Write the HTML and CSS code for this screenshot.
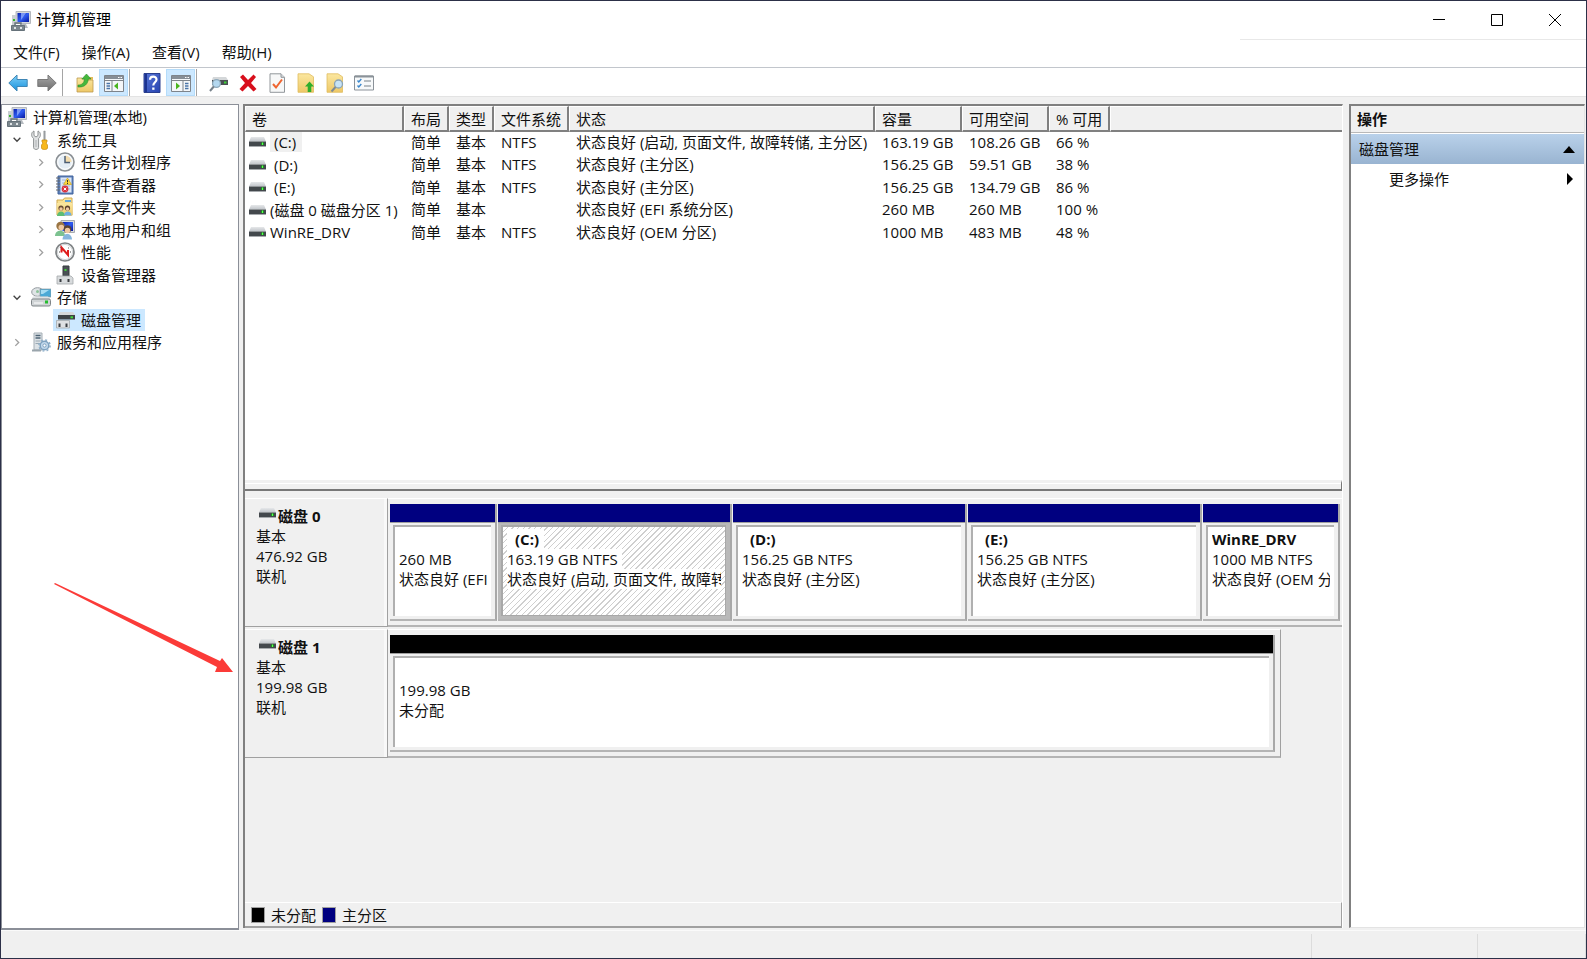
FILE: index.html
```html
<!DOCTYPE html>
<html lang="zh-CN">
<head>
  <meta charset="UTF-8">
  <title>计算机管理</title>
  <link rel="stylesheet" href="styles.css">
</head>
<body>

  <!-- icon sprite -->
  <svg class="sprite" aria-hidden="true">
    <defs>
      <linearGradient id="gScreen" x1="0" y1="0" x2="1" y2="1">
        <stop offset="0" stop-color="#0a1fae"/><stop offset=".5" stop-color="#2f5cf0"/><stop offset="1" stop-color="#0616a0"/>
      </linearGradient>
      <linearGradient id="gBlue" x1="0" y1="0" x2="0" y2="1">
        <stop offset="0" stop-color="#7fd0f8"/><stop offset="1" stop-color="#1590dc"/>
      </linearGradient>
      <linearGradient id="gGray" x1="0" y1="0" x2="0" y2="1">
        <stop offset="0" stop-color="#a8a8a8"/><stop offset="1" stop-color="#6c6c6c"/>
      </linearGradient>
      <linearGradient id="gFolder" x1="0" y1="0" x2="0" y2="1">
        <stop offset="0" stop-color="#fbe7a0"/><stop offset="1" stop-color="#eec867"/>
      </linearGradient>
      <linearGradient id="gDrive" x1="0" y1="0" x2="0" y2="1">
        <stop offset="0" stop-color="#e6e8ea"/><stop offset="1" stop-color="#bfc3c8"/>
      </linearGradient>
      <linearGradient id="gHelp" x1="0" y1="0" x2="1" y2="1">
        <stop offset="0" stop-color="#5877d8"/><stop offset="1" stop-color="#2743b0"/>
      </linearGradient>
    </defs>

    <symbol id="i-computer" viewBox="0 0 20 20">
      <path d="M5 .5h14.500v12H5z" fill="#d5d8dc" stroke="#b4b8be"/>
      <path d="M6.500 2H18v9H6.500z" fill="url(#gScreen)"/>
      <path d="M10 2h5l-5 7z" fill="#9db8ff" opacity=".7"/>
      <path d="M1 4h4v10H1z" fill="#c9ced2"/><path d="M2 8h2v2H2z" fill="#36b52c"/>
      <path d="M11 13h4l2 4h-5z" fill="#b5bac0"/>
      <path d="M.5 14.500h13v5H.5z" fill="#7c878e" stroke="#66727a"/>
      <path d="M4 14v-2h6v2" fill="none" stroke="#66727a" stroke-width="1.400"/>
      <path d="M3 16h2v2H3zM9 16h2v2H9z" fill="#dfe4e6"/>
    </symbol>

    <symbol id="i-tools" viewBox="0 0 20 20">
      <path d="M3 1v4.500l2 1.500 2-1.500V1c3 1.200 3.200 5.500.6 7.500v9c0 2.600-5 2.600-5 0v-9C-.2 6.500 0 2.200 3 1z" fill="#dfe1e2" stroke="#8d9192"/>
      <path d="M5 10v7" stroke="#aeb2b4"/>
      <path d="M12.800 1h1.400v9h-1.400z" fill="#a1a5a8" stroke="#888c8e" stroke-width=".5"/>
      <path d="M11 10h5v2l-1 1 1.500 2v3c0 2-6 2-6 0v-3l1.500-2-1-1z" fill="#f8b81c" stroke="#c48a10" stroke-width=".7"/>
    </symbol>

    <symbol id="i-clock" viewBox="0 0 20 20">
      <circle cx="10" cy="10" r="9" fill="#e9eef2" stroke="#8b9094" stroke-width="1.600"/>
      <circle cx="10" cy="10" r="7.200" fill="#e4edf5" stroke="#fff" stroke-width="1"/>
      <path d="M10 3.500A6.500 6.500 0 0 1 16.500 10H10z" fill="#f3dcae"/>
      <path d="M10 4v6.500h5" fill="none" stroke="#4b5d74" stroke-width="1.500"/>
    </symbol>

    <symbol id="i-event" viewBox="0 0 20 20">
      <path d="M3 1h15v18H3z" fill="#5f82bb" stroke="#40639c"/>
      <path d="M5.500 2.500h11v15h-11z" fill="#dce7f7"/>
      <path d="M7 5h8M7 8h8M7 11h8M7 14h8" stroke="#96acd0" stroke-width=".8"/>
      <path d="M1 3h4M1 6h4M1 9h4M1 12h4M1 15h4" stroke="#65696f" stroke-width="1.200"/>
      <path d="M12.500 3l4 6.500h-8z" fill="#ffd83a" stroke="#c69b15" stroke-width=".6"/>
      <path d="M12.500 5v2.300M12.500 8v1" stroke="#333"/>
      <circle cx="10" cy="14" r="3.400" fill="#d93440"/>
      <path d="M8.700 12.700l2.600 2.600M11.300 12.700l-2.600 2.600" stroke="#fff"/>
    </symbol>

    <symbol id="i-share" viewBox="0 0 20 20">
      <path d="M2 3h6l1.500-2H17v17H2z" fill="url(#gFolder)" stroke="#d2aa4c"/>
      <path d="M10 3h6v2h-6z" fill="#62a6dc"/>
      <path d="M2 6h15.500v12.500H2z" fill="url(#gFolder)"/>
      <circle cx="6" cy="11" r="2.600" fill="#6a4c34"/><circle cx="12.500" cy="11" r="2.600" fill="#5b412d"/>
      <circle cx="6" cy="12" r="1.700" fill="#f0c8a0"/><circle cx="12.500" cy="12" r="1.700" fill="#f0c8a0"/>
      <path d="M2 19c0-6 8-6 8 0z" fill="#5ebc74"/><path d="M9 18.500c0-5.500 7.500-5.500 7.500 0z" fill="#6caee2"/>
    </symbol>

    <symbol id="i-users" viewBox="0 0 20 20">
      <path d="M6 .5h13.500v12H6z" fill="#d9dcdf" stroke="#a8abb0"/>
      <path d="M7.500 2H18v9H7.500z" fill="url(#gScreen)"/>
      <circle cx="5.500" cy="6" r="4.200" fill="#9a7543"/><circle cx="6.300" cy="7.500" r="2.800" fill="#efc9a2"/>
      <path d="M0 16c0-7 10-7 10 0z" fill="#7cc290"/>
      <circle cx="12.500" cy="9" r="3.800" fill="#5c4433"/><circle cx="12.500" cy="10.500" r="2.700" fill="#efc9a2"/>
      <path d="M7.500 19.500c0-7.500 9.500-7.500 9.500 0z" fill="#86b6de"/>
    </symbol>

    <symbol id="i-perf" viewBox="0 0 20 20">
      <circle cx="10" cy="10" r="9" fill="#fff" stroke="#7f8385" stroke-width="1.700"/>
      <circle cx="10" cy="10" r="7.600" fill="#fff" stroke="#d0d3d5"/>
      <path d="M6.500 10.500V5.500l6.500 7.500V8" fill="none" stroke="#e01c1c" stroke-width="2"/>
      <path d="M4 10h1M5.500 5.500l.8.800M15 10h1M14 5.500l-.8.800" stroke="#444"/>
    </symbol>

    <symbol id="i-device" viewBox="0 0 20 20">
      <path d="M8 1h6v10H8z" fill="#4a5055" stroke="#363b3f"/>
      <path d="M9.500 4h2v2h-2z" fill="#43d13b"/>
      <path d="M2 11h14l2 2v6H2z" fill="#d8dbdd" stroke="#a4a8ab" stroke-width=".8"/>
      <path d="M4.500 14h2v3h-2zM12.500 14h2v3h-2z" fill="#3a3e42"/>
    </symbol>

    <symbol id="i-storage" viewBox="0 0 20 20">
      <ellipse cx="6.500" cy="5" rx="5.800" ry="4.300" fill="#dfe4e6" stroke="#949a9f"/>
      <circle cx="6.500" cy="4.500" r="1.500" fill="#8cc39a"/>
      <path d="M9 2h11v8H9z" fill="#4ba9d6" stroke="#8b999f" stroke-width=".7"/><path d="M10 3h8l-6 4h-2z" fill="#a6dcf2"/>
      <path d="M2 9.500h15l2.500 3H.5z" fill="#e0e3e5"/>
      <rect x=".5" y="12" width="19" height="7" rx="1.500" fill="#d0d4d6" stroke="#7f8588"/>
      <path d="M3 16h9" stroke="#fff"/><path d="M14 13.500h3v3h-3z" fill="#26bd2f"/>
    </symbol>

    <symbol id="i-disk" viewBox="0 0 20 20">
      <path d="M5 2h13l2 3H3z" fill="#d5d8da"/>
      <path d="M3 5h17v4.500H3z" fill="#3d4246"/><path d="M15.500 6.300h2.500v2h-2.500z" fill="#40d838"/>
      <path d="M1.500 10.500h13V18h-13z" fill="#dfe1e3" stroke="#a5a9ac" stroke-width=".8"/>
      <path d="M3.500 13.500h2V17h-2zM10.500 13.500h2V17h-2z" fill="#3a3e42"/>
    </symbol>

    <symbol id="i-services" viewBox="0 0 20 20">
      <path d="M3 1h8v17H3z" fill="#dce2e6" stroke="#a5aeb5"/>
      <path d="M4.500 3.500h5M4.500 6h5" stroke="#4e6475" stroke-width="1.300"/><path d="M4.500 9h5M4.500 11.500h5" stroke="#9aa8b2"/>
      <path d="M1 18.500h9" stroke="#9aa5ac" stroke-width="2"/>
      <circle cx="13.500" cy="13.500" r="4.300" fill="#c3d9ec" stroke="#7fa2c0" stroke-width="1.500"/>
      <circle cx="13.500" cy="13.500" r="5.600" fill="none" stroke="#8fafc9" stroke-width="1.500" stroke-dasharray="2 2.400"/>
      <circle cx="13.500" cy="13.500" r="1.600" fill="#fff" stroke="#7fa2c0"/>
    </symbol>

    <symbol id="i-drive" viewBox="0 0 17 10">
      <path d="M2 0h13l2 4.500H0z" fill="url(#gDrive)"/>
      <path d="M0 4.500h17V9H0z" fill="#43484c"/><path d="M0 9h17v1H0z" fill="#a6aaad"/>
      <path d="M12 5.500h3v2.500h-3z" fill="#1d8f25"/><path d="M13 5.500h1v2.500h-1z" fill="#5dff50"/>
    </symbol>

    <symbol id="i-back" viewBox="0 0 20 20">
      <path d="M.8 10L9 2v4.500h10.200v7H9V18z" fill="url(#gBlue)" stroke="#3f86b5" stroke-linejoin="round"/>
    </symbol>
    <symbol id="i-forward" viewBox="0 0 20 20">
      <path d="M19.200 10L11 2v4.500H.8v7H11V18z" fill="url(#gGray)" stroke="#7b7b7b" stroke-linejoin="round"/>
    </symbol>
    <symbol id="i-upfolder" viewBox="0 0 20 20">
      <path d="M2 5h5l1.500 2H18v12H2z" fill="url(#gFolder)" stroke="#bd994f" stroke-width=".8"/>
      <path d="M12 4h6v3h-6z" fill="#e2bc5c"/>
      <path d="M3 12c4 0 6-2 6.500-6H6.800L11.500 1l4.500 5h-2.700C13 11 9.500 14.500 3 14z" fill="#45b83c" stroke="#2d8e2b" stroke-width=".6"/>
    </symbol>
    <symbol id="i-pane-left" viewBox="0 0 20 20">
      <path d="M.5 2.500h19v16H.5z" fill="#f5f7f9" stroke="#7e848b"/>
      <path d="M1 3h18v3H1z" fill="#878e96"/><path d="M14 4.500h1.500M16.500 4.500H18" stroke="#fff"/>
      <path d="M1 7.500h18M8 8v10" stroke="#7e848b"/>
      <path d="M2.500 10.500H6M2.500 13H6M2.500 15.500H6" stroke="#4a74a8" stroke-width="1.300"/>
      <path d="M14 9.500v7L10 13z" fill="#4ab51f"/>
    </symbol>
    <symbol id="i-pane-right" viewBox="0 0 20 20">
      <path d="M.5 2.500h19v16H.5z" fill="#f5f7f9" stroke="#7e848b"/>
      <path d="M1 3h18v3H1z" fill="#878e96"/><path d="M14 4.500h1.500M16.500 4.500H18" stroke="#fff"/>
      <path d="M1 7.500h18M12 8v10" stroke="#7e848b"/>
      <path d="M14 10.500h3.500M14 13h3.500M14 15.500h3.500" stroke="#4a74a8" stroke-width="1.300"/>
      <path d="M5 9.500v7L9 13z" fill="#4ab51f"/>
    </symbol>
    <symbol id="i-help" viewBox="0 0 20 20">
      <path d="M2 .5h16v19H2z" fill="url(#gHelp)" stroke="#2a3f8f"/><path d="M2.500 1h2.500v18H2.500z" fill="#1c3390"/>
      <path d="M8 6.800c0-4.300 6.500-4.200 6.500-.3 0 2.800-3.200 2.800-3.200 6" fill="none" stroke="#fff" stroke-width="2.200"/>
      <path d="M10.200 14.500h2.300v2.300h-2.300z" fill="#fff"/>
    </symbol>
    <symbol id="i-disksearch" viewBox="0 0 20 20">
      <path d="M4 4h13l2 3H3z" fill="#d4d7d9"/><path d="M3 7h16v5H3z" fill="#4a4f53"/><path d="M15 8.500h2.500v2H15z" fill="#3fd338"/>
      <circle cx="7.500" cy="10.500" r="3.900" fill="#b4d8f0" stroke="#8fa9ba" stroke-width="1.300"/>
      <path d="M4.800 13.500L1 18" stroke="#77828b" stroke-width="2"/>
    </symbol>
    <symbol id="i-delete" viewBox="0 0 20 20">
      <path d="M2 4l3-2.500 5 5.500 5.500-5.500L18 4l-5 6 5.500 6-3 2.500L10 13l-5.500 5.500L1.500 16 7 10z" fill="#d80f1c"/>
    </symbol>
    <symbol id="i-doccheck" viewBox="0 0 20 20">
      <path d="M3 .8h11l3.500 3.500v15H3z" fill="#f7f8f8" stroke="#92979b"/><path d="M14 .8v3.500h3.500" fill="#d8dbdd" stroke="#92979b"/>
      <path d="M6 11l3 3.500L15 6.500" fill="none" stroke="#ef6530" stroke-width="2"/>
    </symbol>
    <symbol id="i-folderup" viewBox="0 0 20 20">
      <path d="M2 .8h11l4.500 3v15.500H2z" fill="url(#gFolder)" stroke="#e0bd60" stroke-width=".8"/>
      <path d="M13.500 8.500l4.500 5h-2.700V19h-3.600v-5.500H9z" fill="#2fae2c"/>
    </symbol>
    <symbol id="i-foldersearch" viewBox="0 0 20 20">
      <path d="M2 .8h11l4.500 3v15.500H2z" fill="url(#gFolder)" stroke="#e0bd60" stroke-width=".8"/>
      <circle cx="13.500" cy="11" r="4" fill="#c7e3f6" stroke="#8ba4b6" stroke-width="1.300"/>
      <path d="M10.500 14l-4 4.500" stroke="#7f8b94" stroke-width="2"/>
    </symbol>
    <symbol id="i-list" viewBox="0 0 20 20">
      <path d="M.5 3h19v14H.5z" fill="#f7f9fa" stroke="#8b9299"/><path d="M1 3.500h18" stroke="#8b9299" stroke-width="2"/>
      <path d="M3.500 7.500l1.300 1.500 2.500-3M3.500 12.500l1.300 1.500 2.500-3" fill="none" stroke="#3b87cc" stroke-width="1.400"/>
      <path d="M10 8h7M10 13h7" stroke="#a3a9af" stroke-width="1.300"/>
    </symbol>
    <symbol id="i-open" viewBox="0 0 8 8"><path d="M1 2.500l3 3 3-3" fill="none" stroke="#444" stroke-width="1.200"/></symbol>
    <symbol id="i-closed" viewBox="0 0 8 8"><path d="M2.500 1l3 3-3 3" fill="none" stroke="#a0a0a0" stroke-width="1.200"/></symbol>
  </svg>

  <div class="window">
    <header class="titlebar">
      <svg class="icon"><use href="#i-computer"/></svg>
      <h1>计算机管理</h1>
      <div class="controls">
        <button aria-label="最小化"><svg width="12" height="12"><path d="M0 5.500h12" stroke="#000"/></svg></button>
        <button aria-label="最大化"><svg width="12" height="12"><path d="M.5.5h11v11H.5z" fill="none" stroke="#000"/></svg></button>
        <button aria-label="关闭"><svg width="12" height="12"><path d="M0 0l12 12M12 0L0 12" stroke="#000"/></svg></button>
      </div>
    </header>

    <nav class="menubar">
      <button>文件(F)</button>
      <button>操作(A)</button>
      <button>查看(V)</button>
      <button>帮助(H)</button>
    </nav>

    <div class="toolbar">
      <button aria-label="后退"><svg class="icon"><use href="#i-back"/></svg></button>
      <button aria-label="前进"><svg class="icon"><use href="#i-forward"/></svg></button>
      <span class="sep"></span>
      <button aria-label="向上"><svg class="icon"><use href="#i-upfolder"/></svg></button>
      <button class="on" aria-label="显示控制台树"><svg class="icon"><use href="#i-pane-left"/></svg></button>
      <span class="sep"></span>
      <button aria-label="帮助"><svg class="icon"><use href="#i-help"/></svg></button>
      <button class="on" aria-label="显示操作窗格"><svg class="icon"><use href="#i-pane-right"/></svg></button>
      <span class="sep"></span>
      <button aria-label="重新扫描磁盘"><svg class="icon"><use href="#i-disksearch"/></svg></button>
      <button aria-label="删除"><svg class="icon"><use href="#i-delete"/></svg></button>
      <button aria-label="属性"><svg class="icon"><use href="#i-doccheck"/></svg></button>
      <button aria-label="打开"><svg class="icon"><use href="#i-folderup"/></svg></button>
      <button aria-label="浏览"><svg class="icon"><use href="#i-foldersearch"/></svg></button>
      <button aria-label="列表"><svg class="icon"><use href="#i-list"/></svg></button>
    </div>

    <main class="panes">
      <ul class="tree">
        <li><a href="#"><svg class="icon"><use href="#i-computer"/></svg>计算机管理(本地)</a></li>
        <li><svg class="twisty"><use href="#i-open"/></svg><a href="#"><svg class="icon"><use href="#i-tools"/></svg>系统工具</a></li>
        <li class="sub"><svg class="twisty"><use href="#i-closed"/></svg><a href="#"><svg class="icon"><use href="#i-clock"/></svg>任务计划程序</a></li>
        <li class="sub"><svg class="twisty"><use href="#i-closed"/></svg><a href="#"><svg class="icon"><use href="#i-event"/></svg>事件查看器</a></li>
        <li class="sub"><svg class="twisty"><use href="#i-closed"/></svg><a href="#"><svg class="icon"><use href="#i-share"/></svg>共享文件夹</a></li>
        <li class="sub"><svg class="twisty"><use href="#i-closed"/></svg><a href="#"><svg class="icon"><use href="#i-users"/></svg>本地用户和组</a></li>
        <li class="sub"><svg class="twisty"><use href="#i-closed"/></svg><a href="#"><svg class="icon"><use href="#i-perf"/></svg>性能</a></li>
        <li class="sub"><svg class="twisty"></svg><a href="#"><svg class="icon"><use href="#i-device"/></svg>设备管理器</a></li>
        <li><svg class="twisty"><use href="#i-open"/></svg><a href="#"><svg class="icon"><use href="#i-storage"/></svg>存储</a></li>
        <li class="sub"><svg class="twisty"></svg><a href="#" class="selected"><svg class="icon"><use href="#i-disk"/></svg>磁盘管理</a></li>
        <li><svg class="twisty"><use href="#i-closed"/></svg><a href="#"><svg class="icon"><use href="#i-services"/></svg>服务和应用程序</a></li>
      </ul>

      <section class="center">
        <div class="volumes">
          <table>
            <colgroup>
              <col class="c-vol"><col class="c-short"><col class="c-short"><col class="c-fs"><col class="c-status">
              <col class="c-size"><col class="c-size"><col class="c-pct"><col>
            </colgroup>
            <thead>
              <tr><th>卷</th><th>布局</th><th>类型</th><th>文件系统</th><th>状态</th><th>容量</th><th>可用空间</th><th>% 可用</th><th></th></tr>
            </thead>
            <tbody>
              <tr><td class="vol"><svg class="drive"><use href="#i-drive"/></svg><span class="letter current">(C:)</span></td><td>简单</td><td>基本</td><td>NTFS</td><td>状态良好 (启动, 页面文件, 故障转储, 主分区)</td><td>163.19 GB</td><td>108.26 GB</td><td>66 %</td><td></td></tr>
              <tr><td class="vol"><svg class="drive"><use href="#i-drive"/></svg><span class="letter">(D:)</span></td><td>简单</td><td>基本</td><td>NTFS</td><td>状态良好 (主分区)</td><td>156.25 GB</td><td>59.51 GB</td><td>38 %</td><td></td></tr>
              <tr><td class="vol"><svg class="drive"><use href="#i-drive"/></svg><span class="letter">(E:)</span></td><td>简单</td><td>基本</td><td>NTFS</td><td>状态良好 (主分区)</td><td>156.25 GB</td><td>134.79 GB</td><td>86 %</td><td></td></tr>
              <tr><td class="vol"><svg class="drive"><use href="#i-drive"/></svg><span>(磁盘 0 磁盘分区 1)</span></td><td>简单</td><td>基本</td><td></td><td>状态良好 (EFI 系统分区)</td><td>260 MB</td><td>260 MB</td><td>100 %</td><td></td></tr>
              <tr><td class="vol"><svg class="drive"><use href="#i-drive"/></svg><span>WinRE_DRV</span></td><td>简单</td><td>基本</td><td>NTFS</td><td>状态良好 (OEM 分区)</td><td>1000 MB</td><td>483 MB</td><td>48 %</td><td></td></tr>
            </tbody>
          </table>
        </div>
        <div class="splitter"></div>

        <div class="disks">
          <div class="disk">
            <div class="disk-label">
              <h2><svg class="drive"><use href="#i-drive"/></svg>磁盘 0</h2>
              <p>基本</p>
              <p>476.92 GB</p>
              <p>联机</p>
            </div>
            <div class="map map-five">
              <div class="part">
                <div class="bar"></div>
                <div class="body"><div class="box"><p>&nbsp;</p><p>260 MB</p><p>状态良好 (EFI</p></div></div>
              </div>
              <div class="part active">
                <div class="bar"></div>
                <div class="body"><div class="box"><p><b class="letter">(C:)</b></p><p><span>163.19 GB NTFS</span></p><p><span>状态良好 (启动, 页面文件, 故障转储</span></p></div></div>
              </div>
              <div class="part">
                <div class="bar"></div>
                <div class="body"><div class="box"><p><b class="letter">(D:)</b></p><p>156.25 GB NTFS</p><p>状态良好 (主分区)</p></div></div>
              </div>
              <div class="part">
                <div class="bar"></div>
                <div class="body"><div class="box"><p><b class="letter">(E:)</b></p><p>156.25 GB NTFS</p><p>状态良好 (主分区)</p></div></div>
              </div>
              <div class="part">
                <div class="bar"></div>
                <div class="body"><div class="box"><p><b>WinRE_DRV</b></p><p>1000 MB NTFS</p><p>状态良好 (OEM 分区)</p></div></div>
              </div>
            </div>
          </div>

          <div class="disk">
            <div class="disk-label">
              <h2><svg class="drive"><use href="#i-drive"/></svg>磁盘 1</h2>
              <p>基本</p>
              <p>199.98 GB</p>
              <p>联机</p>
            </div>
            <div class="map map-short">
              <div class="part">
                <div class="bar free"></div>
                <div class="body"><div class="box"><p>&nbsp;</p><p>199.98 GB</p><p>未分配</p></div></div>
              </div>
            </div>
          </div>
        </div>

        <div class="legend">
          <span class="swatch free"></span>未分配
          <span class="swatch"></span>主分区
        </div>
      </section>

      <aside class="actions">
        <h2>操作</h2>
        <button class="group">磁盘管理<svg width="12" height="7"><path d="M6 0l6 7H0z"/></svg></button>
        <button class="more">更多操作<svg width="12" height="12"><path d="M4 0l6 6-6 6z"/></svg></button>
      </aside>
    </main>

    <footer class="statusbar"><span></span><span></span><span></span></footer>

    <svg class="pointer" width="180" height="90"><path d="M0 1l1-1L166 78l2-3 11 14h-18l2-5z" fill="#fb3b38"/></svg>
  </div>

</body>
</html>
```

FILE: styles.css
```css
* {
  box-sizing: border-box;
}

body {
  margin: 0;
  font: 15px/20px "Open Sans", "Noto Sans CJK SC", sans-serif;
  color: #111;
}

h1, h2, p, ul {
  margin: 0;
  padding: 0;
  font-size: 15px;
}

h1 {
  padding-bottom: 3px;
  font-weight: normal;
  color: #000;
}

button {
  border: 0;
  padding: 0;
  background: none;
  font: inherit;
  color: inherit;
}

svg {
  display: block;
  flex: none;
}

.sprite {
  position: absolute;
  width: 0;
  height: 0;
}

.icon {
  width: 20px;
  height: 20px;
}

.drive {
  width: 17px;
  height: 10px;
}

.window {
  position: relative;
  display: flex;
  flex-direction: column;
  height: 100vh;
  border: 1px solid #2c3048;
  background: #f0f0f0;
  overflow: hidden;
}

/* title, menu, toolbar */
.titlebar {
  display: flex;
  align-items: center;
  gap: 5px;
  height: 39px;
  padding-left: 10px;
  background: #fff;
}

.controls {
  display: flex;
  justify-content: flex-end;
  width: 346px;
  height: 39px;
  margin-left: auto;
  padding-right: 2px;
  border-bottom: 1px solid #e8e8e8;
}

.controls button {
  display: flex;
  align-items: center;
  justify-content: center;
  width: 58px;
}

.menubar {
  display: flex;
  gap: 22px;
  height: 28px;
  padding: 0 0 3px 12px;
  background: #fff;
  border-bottom: 1px solid #c2c6cc;
}

.toolbar {
  display: flex;
  height: 29px;
  padding: 1px 0 0 2px;
  background: #fff;
  border-bottom: 1px solid #e3e3e3;
}

.toolbar button {
  display: flex;
  align-items: center;
  justify-content: center;
  width: 29px;
}

.toolbar .on {
  background: #cce8ff;
  border: 1px solid #b5dcfa;
}

.sep {
  width: 1px;
  margin: 0 7px 0 1px;
  background: #a5a5a5;
}

.panes {
  display: flex;
  flex: 1;
  min-height: 0;
  padding: 7px 1px 0 0;
}

/* left tree */
.tree {
  flex: 0 0 238px;
  padding: 1px 0 0 3px;
  background: #fff;
  border: 1px solid #8b8f98;
  border-bottom-width: 2px;
  list-style: none;
}

.tree li {
  display: flex;
  align-items: center;
  height: 22px;
}

.tree li:nth-child(even) {
  height: 23px;
}

.tree .sub {
  padding-left: 24px;
}

.tree a {
  display: flex;
  align-items: center;
  gap: 6px;
  height: 22px;
  padding: 0 4px 0 2px;
  color: inherit;
  text-decoration: none;
}

.tree .selected {
  background: #cce8ff;
}

.twisty {
  width: 24px;
  height: 9px;
}

/* volume list */
.center {
  display: flex;
  flex-direction: column;
  flex: 1;
  min-width: 0;
  margin: 0 6px 2px 4px;
  border-top: 2px solid #808080;
  border-left: 2px solid #808080;
  border-right: 1px solid #fff;
}

.volumes {
  flex: 0 0 374px;
  background: #fff;
}

table {
  width: 100%;
  table-layout: fixed;
  border-collapse: separate;
  border-spacing: 0;
}

th {
  height: 26px;
  padding: 0 0 0 6px;
  background: #f0f0f0;
  border: solid;
  border-width: 1px 2px 2px 1px;
  border-color: #fff #808080 #808080 #fff;
  font-weight: normal;
  text-align: left;
}

th:last-child {
  border-right: 0;
}

td {
  height: 22px;
  padding: 0 0 0 7px;
  vertical-align: top;
  white-space: nowrap;
}

tr:nth-child(even) td {
  height: 23px;
}

.c-vol { width: 159px; }
.c-short { width: 45px; }
.c-fs { width: 75px; }
.c-status { width: 306px; }
.c-size { width: 87px; }
.c-pct { width: 61px; }

td.vol {
  display: flex;
  align-items: center;
  gap: 4px;
  padding: 0 0 2px 4px;
}

.vol .letter {
  padding: 0 6px 0 4px;
}

.vol .current {
  background: #f0f0f0;
}

.splitter {
  flex: 0 0 11px;
  background: #f0f0f0;
  border-top: 3px solid #f0f0f0;
  border-bottom: 2px solid #777;
  border-right: 1px solid #777;
  box-shadow: inset 0 1px #fff;
}

/* graphical view */
.disks {
  flex: 1;
  min-height: 0;
  padding-top: 7px;
  overflow: hidden;
}

.disk {
  display: flex;
  height: 129px;
  margin-bottom: 2px;
}

.disk-label {
  flex: 0 0 143px;
  padding: 7px 0 0 11px;
  border-top: 1px solid #fff;
  border-right: 1px solid #a0a0a0;
  border-bottom: 1px solid #a0a0a0;
  box-shadow: inset -3px 0 #f8f8f8;
}

.disk-label h2 {
  display: flex;
  gap: 2px;
  padding-left: 3px;
}

.disk-label .drive {
  margin-top: 2px;
}

.map {
  display: grid;
  flex: 1;
  gap: 1px;
  min-width: 0;
  padding: 5px 2px 4px;
  border-top: 1px solid #fff;
  border-bottom: 2px solid #b4b4b4;
}

.map-five {
  grid-template-columns: 107fr 234fr 234fr 234fr 137fr;
}

.map-short {
  margin-right: 61px;
  padding-right: 5px;
  border-right: 1px solid #a0a0a0;
}

.part {
  display: flex;
  flex-direction: column;
  min-width: 0;
  border-right: 2px solid #a8a8a8;
  border-bottom: 2px solid #b4b4b4;
}

.bar {
  height: 19px;
  background: #000080;
  border-bottom: 1px solid #a0a0a0;
}

.bar.free {
  background: #000;
}

.body {
  flex: 1;
  min-height: 0;
  padding: 2px 4px 3px 3px;
}

.box {
  height: 100%;
  padding: 2px 4px 0;
  background: #fff;
  border: solid #b0b0b0;
  border-width: 2px 0 0 2px;
}

.box p {
  height: 20px;
  overflow: hidden;
  white-space: nowrap;
}

.box .letter {
  padding: 0 5px 0 8px;
}

.active .body {
  background: #b9b9b9;
}

.active .box {
  background: repeating-linear-gradient(135deg, #fff 0 3px, #cfcfcf 3px 4px);
  border-width: 2px 1px 1px 2px;
  border-color: #a8a8a8;
}

.active .box b, .active .box span {
  display: inline-block;
  background: #fff;
}

.active .box span {
  padding-right: 4px;
}

.legend {
  display: flex;
  align-items: center;
  gap: 6px;
  height: 26px;
  padding-left: 6px;
  border-top: 1px solid #fff;
  border-right: 1px solid #a0a0a0;
  border-bottom: 2px solid #a0a0a0;
}

.swatch {
  width: 14px;
  height: 16px;
  background: #000080;
  border: 1px solid #a0a0a0;
}

.swatch.free {
  background: #000;
}

/* actions pane */
.actions {
  flex: 0 0 236px;
  margin-bottom: 2px;
  background: #fff;
  border: solid;
  border-width: 2px 1px 1px 2px;
  border-color: #808080 #e3e3e3 #e3e3e3 #808080;
}

.actions h2 {
  height: 27px;
  padding-left: 6px;
  line-height: 27px;
  background: #f0f0f0;
  border-bottom: 1px solid #b8b8b8;
}

.actions button {
  display: flex;
  align-items: center;
  justify-content: space-between;
  width: 100%;
  height: 30px;
  padding: 0 9px 0 8px;
}

.actions .group {
  margin-top: 1px;
  background: linear-gradient(#b9d1ea, #99b4d1);
}

.actions .more {
  padding-left: 38px;
}

.statusbar {
  display: flex;
  justify-content: flex-end;
  height: 28px;
  padding-top: 3px;
  border-top: 1px solid #fafafa;
}

.statusbar span {
  border-right: 1px solid #dcdcdc;
  width: 166px;
}

.statusbar span:last-child {
  width: 108px;
}

/* red arrow over the tree */
.pointer {
  position: absolute;
  left: 53px;
  top: 582px;
}
```
